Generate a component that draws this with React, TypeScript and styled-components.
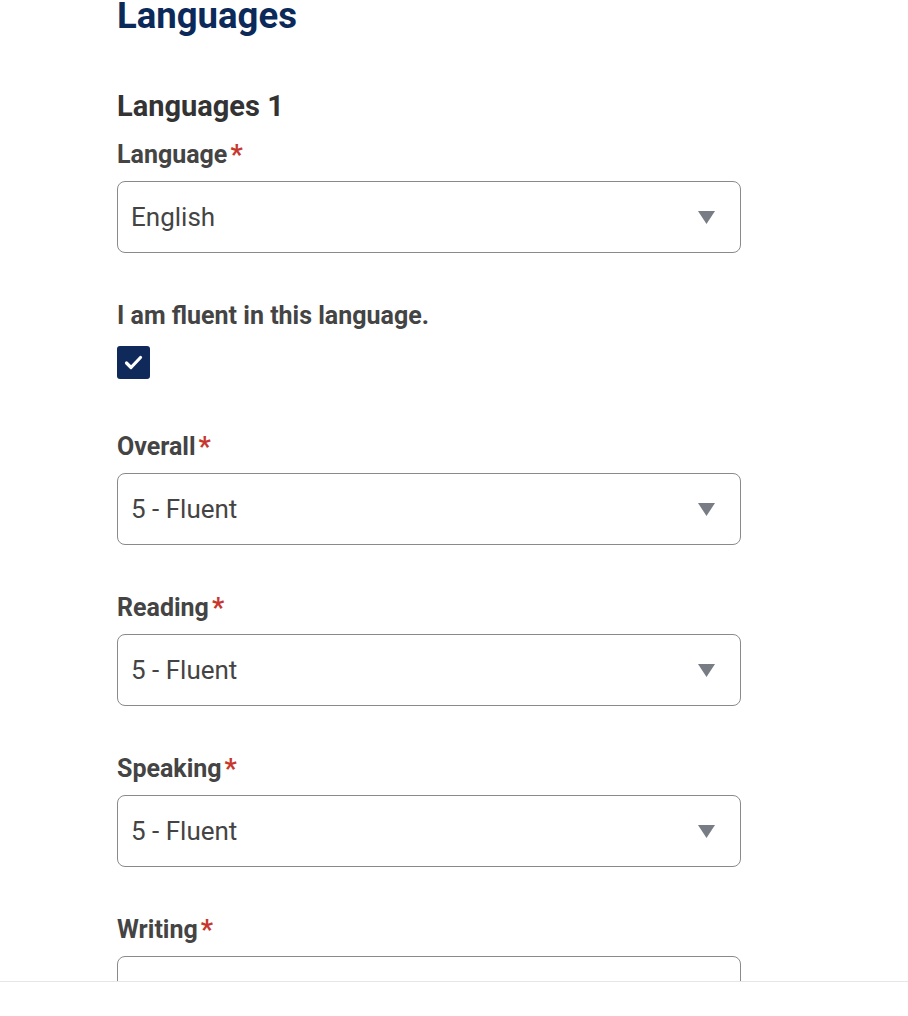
import React from 'react';
import styled, { createGlobalStyle } from 'styled-components';

const GlobalStyle = createGlobalStyle`
  html, body {
    margin: 0;
    padding: 0;
    background: #ffffff;
    font-family: Roboto, "Liberation Sans", Arial, sans-serif;
    overflow: hidden;
  }
`;

const Page = styled.div`
  padding-left: 117px;
  width: 624px;
  height: 1016px;
  overflow: hidden;
`;

const Title = styled.h1`
  margin: -6px 0 0;
  font-size: 36.5px;
  line-height: 43px;
  font-weight: 700;
  color: #0c2a59;
`;

const SectionTitle = styled.h2`
  margin: 52px 0 17px;
  font-size: 29px;
  line-height: 34px;
  font-weight: 700;
  color: #333333;
`;

const Field = styled.div<{ gap?: number }>`
  display: flex;
  flex-direction: column;
  margin-bottom: ${({ gap }) => (gap ?? 48)}px;
`;

const Label = styled.label`
  display: flex;
  align-items: flex-start;
  gap: 3px;
  margin-bottom: 11px;
  font-size: 25px;
  line-height: 30px;
  font-weight: 700;
  color: #444444;
`;

const Required = styled.span`
  color: #c8372d;
  font-weight: 700;
  font-size: 27px;
  line-height: 30px;
`;

const SelectBox = styled.div`
  box-sizing: border-box;
  display: flex;
  align-items: center;
  justify-content: space-between;
  height: 72px;
  width: 624px;
  padding: 0 25px 0 13px;
  border: 1px solid #8a8a8a;
  border-radius: 8px;
  background: #ffffff;
  font-size: 26px;
  color: #444444;
`;

const Arrow = styled.svg`
  width: 17px;
  height: 13px;
  flex: none;
`;

const CheckLabel = styled.div`
  font-size: 25px;
  line-height: 30px;
  font-weight: 700;
  color: #444444;
  margin-bottom: 15px;
`;

const CheckBox = styled.div`
  box-sizing: border-box;
  width: 33px;
  height: 33px;
  border-radius: 3px;
  background: #0f2a5a;
  display: flex;
  align-items: center;
  justify-content: center;
  margin-bottom: 53px;
`;

const Footer = styled.div`
  position: fixed;
  left: 0;
  right: 0;
  bottom: 0;
  height: 34px;
  background: #ffffff;
  border-top: 1px solid #e6e6e6;
`;

const Select: React.FC<{ value?: string }> = ({ value }) => (
  <SelectBox>
    <span>{value}</span>
    <Arrow viewBox="0 0 17 13">
      <path d="M0 0 H17 L8.5 13 Z" fill="#787d85" />
    </Arrow>
  </SelectBox>
);

const ratings = ['Overall', 'Reading', 'Speaking', 'Writing'];

export default function App() {
  return (
    <>
      <GlobalStyle />
      <Page>
        <Title>Languages</Title>
        <SectionTitle>Languages 1</SectionTitle>

        <Field gap={48}>
          <Label>
            Language<Required>*</Required>
          </Label>
          <Select value="English" />
        </Field>

        <CheckLabel>I am fluent in this language.</CheckLabel>
        <CheckBox>
          <svg width="19" height="15" viewBox="0 0 19 15">
            <path
              d="M2.5 8 L7 12.5 L16.5 2.5"
              fill="none"
              stroke="#ffffff"
              strokeWidth="3.2"
              strokeLinecap="round"
              strokeLinejoin="round"
            />
          </svg>
        </CheckBox>

        {ratings.map(name => (
          <Field key={name}>
            <Label>
              {name}<Required>*</Required>
            </Label>
            <Select value={name === 'Writing' ? '' : '5 - Fluent'} />
          </Field>
        ))}
      </Page>
      <Footer />
    </>
  );
}
